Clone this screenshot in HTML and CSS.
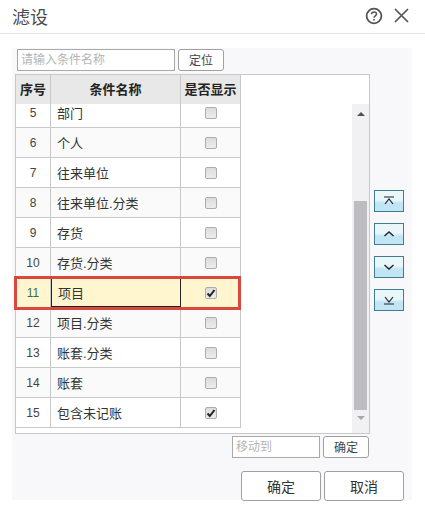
FILE: index.html
```html
<!DOCTYPE html>
<html lang="zh-CN">
<head>
  <meta charset="UTF-8" />
  <title>滤设</title>
  <link rel="stylesheet" href="styles.css">
</head>
<body>
  <div class="titlebar">
    <span class="title">滤设</span>
    <div class="title-icons">
      <svg width="18" height="18" viewBox="0 0 18 18" fill="none" stroke="#555" stroke-width="1.8"><circle cx="9" cy="9" r="7.4"/><path d="M6.5 7.2c0-1.5 1.1-2.3 2.5-2.3s2.5.9 2.5 2.1c0 1.800-2.500 1.800-2.500 3.800" stroke-width="1.500"/><path d="M9 12v1.600" stroke-width="1.600"/></svg>
      <svg width="15" height="15" viewBox="0 0 15 15" fill="none" stroke="#555" stroke-width="1.700"><path d="M1 1l13 13M14 1L1 14"/></svg>
    </div>
  </div>

  <div class="panel">
    <div class="search-row">
      <input class="field search-field" placeholder="请输入条件名称" />
      <button class="btn-small">定位</button>
    </div>

    <div class="main-row">
      <div class="grid">
        <div class="grid-body">
          <div class="grid-head">
            <div class="row head-row">
              <div class="c-no">序号</div>
              <div class="c-name">条件名称</div>
              <div class="c-show">是否显示</div>
            </div>
          </div>
          <div class="rows">
            <div class="rows-inner">
              <div class="row"><div class="c-no">5</div><div class="c-name">部门</div><div class="c-show"><span class="check"></span></div></div>
              <div class="row alt"><div class="c-no">6</div><div class="c-name">个人</div><div class="c-show"><span class="check"></span></div></div>
              <div class="row"><div class="c-no">7</div><div class="c-name">往来单位</div><div class="c-show"><span class="check"></span></div></div>
              <div class="row alt"><div class="c-no">8</div><div class="c-name">往来单位.分类</div><div class="c-show"><span class="check"></span></div></div>
              <div class="row"><div class="c-no">9</div><div class="c-name">存货</div><div class="c-show"><span class="check"></span></div></div>
              <div class="row alt"><div class="c-no">10</div><div class="c-name">存货.分类</div><div class="c-show"><span class="check"></span></div></div>
              <div class="row selected"><div class="c-no">11</div><div class="c-name">项目</div><div class="c-show"><span class="check"><svg width="10" height="10" viewBox="0 0 10 10"><path d="M1.500 5.500l2.300 2.500 4.700-6" fill="none" stroke="#222" stroke-width="2"/></svg></span></div></div>
              <div class="row alt"><div class="c-no">12</div><div class="c-name">项目.分类</div><div class="c-show"><span class="check"></span></div></div>
              <div class="row"><div class="c-no">13</div><div class="c-name">账套.分类</div><div class="c-show"><span class="check"></span></div></div>
              <div class="row alt"><div class="c-no">14</div><div class="c-name">账套</div><div class="c-show"><span class="check"></span></div></div>
              <div class="row"><div class="c-no">15</div><div class="c-name">包含未记账</div><div class="c-show"><span class="check"><svg width="10" height="10" viewBox="0 0 10 10"><path d="M1.500 5.500l2.300 2.500 4.700-6" fill="none" stroke="#222" stroke-width="2"/></svg></span></div></div>
            </div>
          </div>
        </div>
        <div class="scrollbar">
          <span class="arrow-up"></span>
          <div class="thumb"></div>
          <span class="arrow-down"></span>
        </div>
      </div>

      <div class="side-btns">
        <button class="side-btn"><svg width="14" height="10" viewBox="0 0 14 10" fill="none" stroke="#222" stroke-width="1.200"><path d="M2 1h10M3 8l4-5 4 5"/></svg></button>
        <button class="side-btn"><svg width="14" height="10" viewBox="0 0 14 10" fill="none" stroke="#222" stroke-width="1.400"><path d="M2.500 7L7 3l4.500 4"/></svg></button>
        <button class="side-btn"><svg width="14" height="10" viewBox="0 0 14 10" fill="none" stroke="#222" stroke-width="1.400"><path d="M2.500 3L7 7l4.500-4"/></svg></button>
        <button class="side-btn"><svg width="14" height="10" viewBox="0 0 14 10" fill="none" stroke="#222" stroke-width="1.200"><path d="M3 2l4 5 4-5M2 9h10"/></svg></button>
      </div>
    </div>

    <div class="move-row">
      <input class="field move-field" placeholder="移动到" />
      <button class="btn-small">确定</button>
    </div>

    <div class="footer">
      <button class="btn-large">确定</button>
      <button class="btn-large">取消</button>
    </div>
  </div>
</body>
</html>
```

FILE: styles.css
```css
body {
  margin: 0;
  width: 425px;
  height: 514px;
  overflow: hidden;
  background: #fff;
  color: #333;
  font-family: "Liberation Sans", "Noto Sans CJK SC", sans-serif;
  font-size: 13px;
}
.titlebar {
  display: flex;
  align-items: center;
  justify-content: space-between;
  height: 31px;
  padding: 0 16px 2px 12px;
  border-bottom: 1px solid #e6e6e6;
  box-sizing: content-box;
}
.title {
  font-size: 18px;
  color: #4a4a4a;
}
.title-icons {
  display: flex;
  align-items: center;
  gap: 11px;
}
.panel {
  width: 400px;
  height: 452px;
  margin: 14px 0 0 12px;
  padding-top: 1px;
  box-sizing: border-box;
  background: #f8f8fa;
}
.search-row {
  display: flex;
  gap: 3px;
  padding-left: 5px;
}
.field {
  box-sizing: border-box;
  height: 22px;
  padding: 0 3px;
  border: 1px solid #a9a9a9;
  background: #fff;
  font: 12px "Liberation Sans", "Noto Sans CJK SC", sans-serif;
  outline: none;
}
.field::placeholder {
  color: #b5b5b5;
}
.search-field {
  width: 158px;
}
.move-field {
  width: 88px;
}
.btn-small {
  box-sizing: border-box;
  width: 46px;
  height: 22px;
  padding: 0 0 2px;
  border: 1px solid #a0a0a0;
  border-radius: 3px;
  background: #fff;
  color: #444;
  font: 12px "Liberation Sans", "Noto Sans CJK SC", sans-serif;
}
.main-row {
  display: flex;
  margin: 3px 0 0 3px;
}
.grid {
  display: flex;
  width: 355px;
  height: 360px;
  box-sizing: border-box;
  border: 1px solid #c8c8c8;
  background: #fff;
}
.grid-body {
  width: 225px;
  display: flex;
  flex-direction: column;
}
.row {
  display: grid;
  grid-template-columns: 35px 130px 60px;
  height: 30px;
  box-sizing: border-box;
  border-bottom: 1px solid #c8c8c8;
  background: #fff;
  position: relative;
}
.row > div {
  display: flex;
  align-items: center;
  justify-content: center;
  box-sizing: border-box;
  border-right: 1px solid #c8c8c8;
}
.row .c-name {
  justify-content: flex-start;
  padding-left: 6px;
  color: #333;
}
.row .c-no {
  color: #444;
  font-size: 12px;
}
.row.alt {
  background: #fafafa;
}
.head-row {
  height: 29px;
  background: #e8e8e8;
  border-bottom: 0;
  font-weight: bold;
  z-index: 2;
}
.head-row > div {
  padding-bottom: 3px;
}
.head-row > div,
.head-row .c-no {
  font-size: 13px;
  color: #222;
}
.head-row .c-name {
  justify-content: center;
  padding-left: 0;
  color: #222;
}
.rows {
  flex: 1;
}
.rows-inner {
  margin-top: -7px;
  padding-top: 1px;
}
.row.selected {
  background: #fff6cf;
  z-index: 1;
}
.row.selected .c-no {
  color: #3c6e3c;
}
.row.selected .c-name {
  border: 1px solid #222;
}
.row.selected::after {
  content: "";
  position: absolute;
  left: -2px;
  right: 0;
  top: -2px;
  bottom: -3px;
  border: 3px solid #d9483f;
}
.check {
  display: flex;
  align-items: center;
  justify-content: center;
  width: 12px;
  height: 12px;
  box-sizing: border-box;
  border: 1px solid #adadad;
  border-radius: 2px;
  background: linear-gradient(#dcdcdc, #ececec);
}
.scrollbar {
  margin-left: auto;
  width: 17px;
  display: flex;
  flex-direction: column;
  align-items: center;
  padding: 8px 0 9px;
  box-sizing: border-box;
  background: #f1f1f3;
  margin-top: 29px;
}
.arrow-up,
.arrow-down {
  width: 0;
  height: 0;
  border-left: 4px solid transparent;
  border-right: 4px solid transparent;
}
.arrow-up {
  border-bottom: 4px solid #505050;
}
.arrow-down {
  border-top: 4px solid #a8a8a8;
}
.thumb {
  width: 13px;
  height: 209px;
  margin: 85px 0 6px;
  background: #bdbcc0;
}
.side-btns {
  display: flex;
  flex-direction: column;
  gap: 11px;
  margin: 116px 0 0 4px;
}
.side-btn {
  display: flex;
  align-items: center;
  justify-content: center;
  width: 30px;
  height: 22px;
  padding: 0;
  border: 1px solid #3f7f8c;
  background: linear-gradient(#e9f7fb 45%, #c2e5f5 60%);
}
.move-row {
  display: flex;
  justify-content: flex-end;
  gap: 3px;
  width: 357px;
  margin-top: 2px;
}
.footer {
  display: flex;
  gap: 3px;
  margin: 13px 0 0 229px;
}
.btn-large {
  box-sizing: border-box;
  width: 80px;
  height: 30px;
  padding: 0;
  border: 1px solid #a0a0a0;
  border-radius: 3px;
  background: #fff;
  color: #333;
  font: 14px "Liberation Sans", "Noto Sans CJK SC", sans-serif;
}
```
